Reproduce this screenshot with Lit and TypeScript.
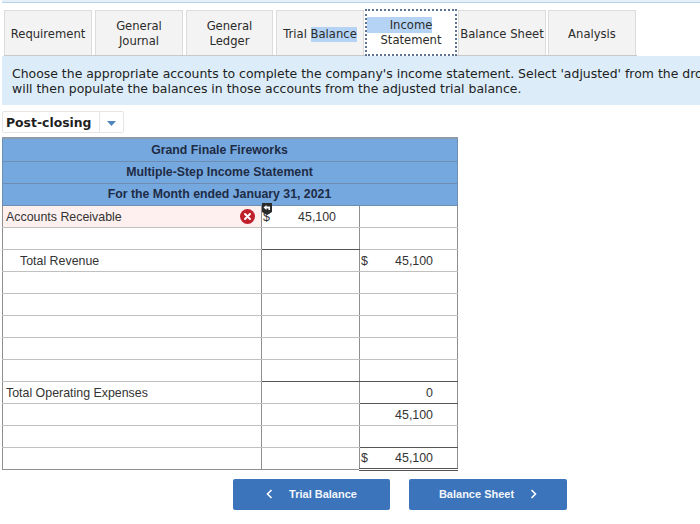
import { LitElement, html, css } from "lit";
import { customElement } from "lit/decorators.js";

type Row = { label?: string; indent?: boolean; sym1?: string; v1?: string; sym2?: string; v2?: string; cls?: string };

const rows: Row[] = [
  { label: "Accounts Receivable", v1: "45,100", sym1: "$", cls: "err" },
  { cls: "under1" },
  { label: "Total Revenue", indent: true, sym2: "$", v2: "45,100" },
  {}, {}, {}, {},
  { cls: "under12" },
  { label: "Total Operating Expenses", v2: "0", cls: "under2" },
  { v2: "45,100" },
  { cls: "under2" },
  { sym2: "$", v2: "45,100", cls: "last" },
];

@customElement("app-root")
export class AppRoot extends LitElement {
  static styles = css`
    :host { display: block; width: 700px; height: 524px; overflow: hidden; background: #fff; font-family: "DejaVu Sans", sans-serif; color: #2b2b2b; }
    .topbar { height: 2px; margin-left: 2px; background: #e3f0fa; border-bottom: 1px solid #b5d2ea; }
    .tabs { display: flex; margin: 7px 0 0 4px; height: 45px; gap: 3px; }
    .tab { box-sizing: border-box; height: 45px; width: 88px; padding-top: 2px; background: #f4f3f3; border: 1px solid #dcdcdc; border-bottom: none; font-size: 11.6px; line-height: 15px; display: flex; align-items: center; justify-content: center; text-align: center; white-space: nowrap; }
    .w87 { width: 87px; }
    .active { width: 92px; height: 47px; margin: -1px -2px 0; padding-top: 1px; background: #fff; border: 2px dotted #5d7391; position: relative; z-index: 1; }
    .sel { background: #b5d3f5; }
    .income { background: #b5d3f5; padding: 1px 0 1px 23px; margin-left: -23px; }
    .tight { margin-left: -1px; }
    .rule { height: 1px; background: #c9c9c9; margin-left: 4px; width: 633px; }
    .note { margin-left: 2px; height: 49px; box-sizing: border-box; padding: 11px 0 0 10px; background: #dcedf9; font-size: 12.45px; line-height: 14.5px; white-space: nowrap; overflow: hidden; color: #222; }
    .drop { display: flex; align-items: stretch; margin: 6px 0 0 2px; width: 122px; height: 22px; box-sizing: border-box; border: 1px solid #e6e6e6; border-radius: 2px; font-weight: 700; font-size: 12.4px; color: #1f1f1f; }
    .drop span { flex: 1; padding-left: 3px; line-height: 21px; border-right: 1px solid #e6e6e6; }
    .drop i { width: 23px; display: flex; align-items: center; justify-content: center; padding-top: 2px; }
    table { border-collapse: collapse; table-layout: fixed; width: 455px; margin: 4px 0 0 2px; font-family: "Liberation Sans", sans-serif; font-size: 12.4px; color: #333; }
    col.a { width: 259px; } col.b { width: 98px; } col.c { width: 98px; }
    td { border: 1px solid #8f8f8f; border-top-color: #c0c0c0; border-bottom-color: #c0c0c0; height: 22px; padding: 1px 0 0; box-sizing: border-box; position: relative; }
    td.h { height: 22px; padding: 0 21px 0 0; background: #76a8e0; border: 1px solid #6f8db3; text-align: center; font-weight: 700; color: #1e2c45; font-size: 12.3px; }
    tr.first td.h { height: 23px; border-top: 2px solid #8e9aa8; }
    td.lab { padding-left: 3px; }
    td.ind { padding-left: 17px; }
    tr.err td.l { background: #fdf0ef; }
    .cell { display: flex; justify-content: space-between; padding: 0 23px 0 1px; }
    .v2 .cell { padding-right: 24px; }
    .x { position: absolute; right: 6px; top: 3px; width: 15px; height: 15px; }
    .rev { position: absolute; left: 0; top: -3px; width: 10px; height: 12px; }
    tr.under1 td.v1 { border-bottom: 1px solid #555; }
    tr.under12 td.v1, tr.under12 td.v2 { border-bottom: 1px solid #555; }
    tr.under2 td.v2 { border-bottom: 1px solid #555; }
    tr.last td { border-bottom-color: #8f8f8f; }
    tr.last td.v2 { border-bottom: 3px double #555; }
    .nav { display: flex; gap: 19px; margin: 8px 0 0 233px; }
    .btn { box-sizing: border-box; width: 157px; height: 31px; background: #3b74bb; border-radius: 2px; color: #f2f6fb; font-family: "Liberation Sans", sans-serif; font-weight: 700; font-size: 11px; display: flex; align-items: center; justify-content: center; gap: 16px; }
    .btn.wide { width: 158px; }
  `;

  private cell(sym?: string, v?: string) {
    if (!sym && !v) return "";
    return html`<div class="cell"><span>${sym ?? ""}</span><span>${v ?? ""}</span></div>`;
  }

  render() {
    return html`
      <div class="topbar"></div>
      <div class="tabs">
        <div class="tab">Requirement</div>
        <div class="tab">General<br />Journal</div>
        <div class="tab w87">General<br />Ledger</div>
        <div class="tab">Trial&nbsp;<span class="sel">Balance</span></div>
        <div class="tab active"><div><span class="income">Income</span><br />Statement</div></div>
        <div class="tab">Balance Sheet</div>
        <div class="tab tight">Analysis</div>
      </div>
      <div class="rule"></div>
      <div class="note">Choose the appropriate accounts to complete the company's income statement. Select 'adjusted' from the dropdown. This<br />will then populate the balances in those accounts from the adjusted trial balance.</div>
      <div class="drop"><span>Post-closing</span><i><svg width="9" height="5" viewBox="0 0 9 5"><path d="M0 0h9L4.500 5z" fill="#4f84bd" /></svg></i></div>
      <table>
        <colgroup><col class="a" /><col class="b" /><col class="c" /></colgroup>
        <tr class="first"><td class="h" colspan="3">Grand Finale Fireworks</td></tr>
        <tr><td class="h" colspan="3">Multiple-Step Income Statement</td></tr>
        <tr><td class="h" colspan="3">For the Month ended January 31, 2021</td></tr>
        ${rows.map((r) => html`
          <tr class=${r.cls ?? ""}>
            <td class="l ${r.indent ? "ind" : "lab"}">${r.label ?? ""}
              ${r.cls === "err" ? html`<svg class="x" viewBox="0 0 15 15"><circle cx="7.500" cy="7.500" r="7.500" fill="#c0202c" /><path d="M5 5l5 5M10 5l-5 5" stroke="#fff" stroke-width="2" stroke-linecap="round" /></svg>` : ""}
            </td>
            <td class="v1">
              ${this.cell(r.sym1, r.v1)}
              ${r.cls === "err" ? html`<svg class="rev" viewBox="0 0 10 12"><path d="M0 0h10v9L5 12 0 9z" fill="#2b2b2b" /><path d="M1.500 4.500L4.500 2v1.500H8V7H6.500V5.500h-2V7z" fill="#fff" /></svg>` : ""}
            </td>
            <td class="v2">${this.cell(r.sym2, r.v2)}</td>
          </tr>`)}
      </table>
      <div class="nav">
        <div class="btn"><svg width="7" height="10" viewBox="0 0 7 10"><path d="M5.500 1L1.500 5l4 4" fill="none" stroke="#fff" stroke-width="1.600" /></svg><span>Trial Balance</span></div>
        <div class="btn wide"><span>Balance Sheet</span><svg width="7" height="10" viewBox="0 0 7 10"><path d="M1.500 1l4 4-4 4" fill="none" stroke="#fff" stroke-width="1.600" /></svg></div>
      </div>
    `;
  }
}
